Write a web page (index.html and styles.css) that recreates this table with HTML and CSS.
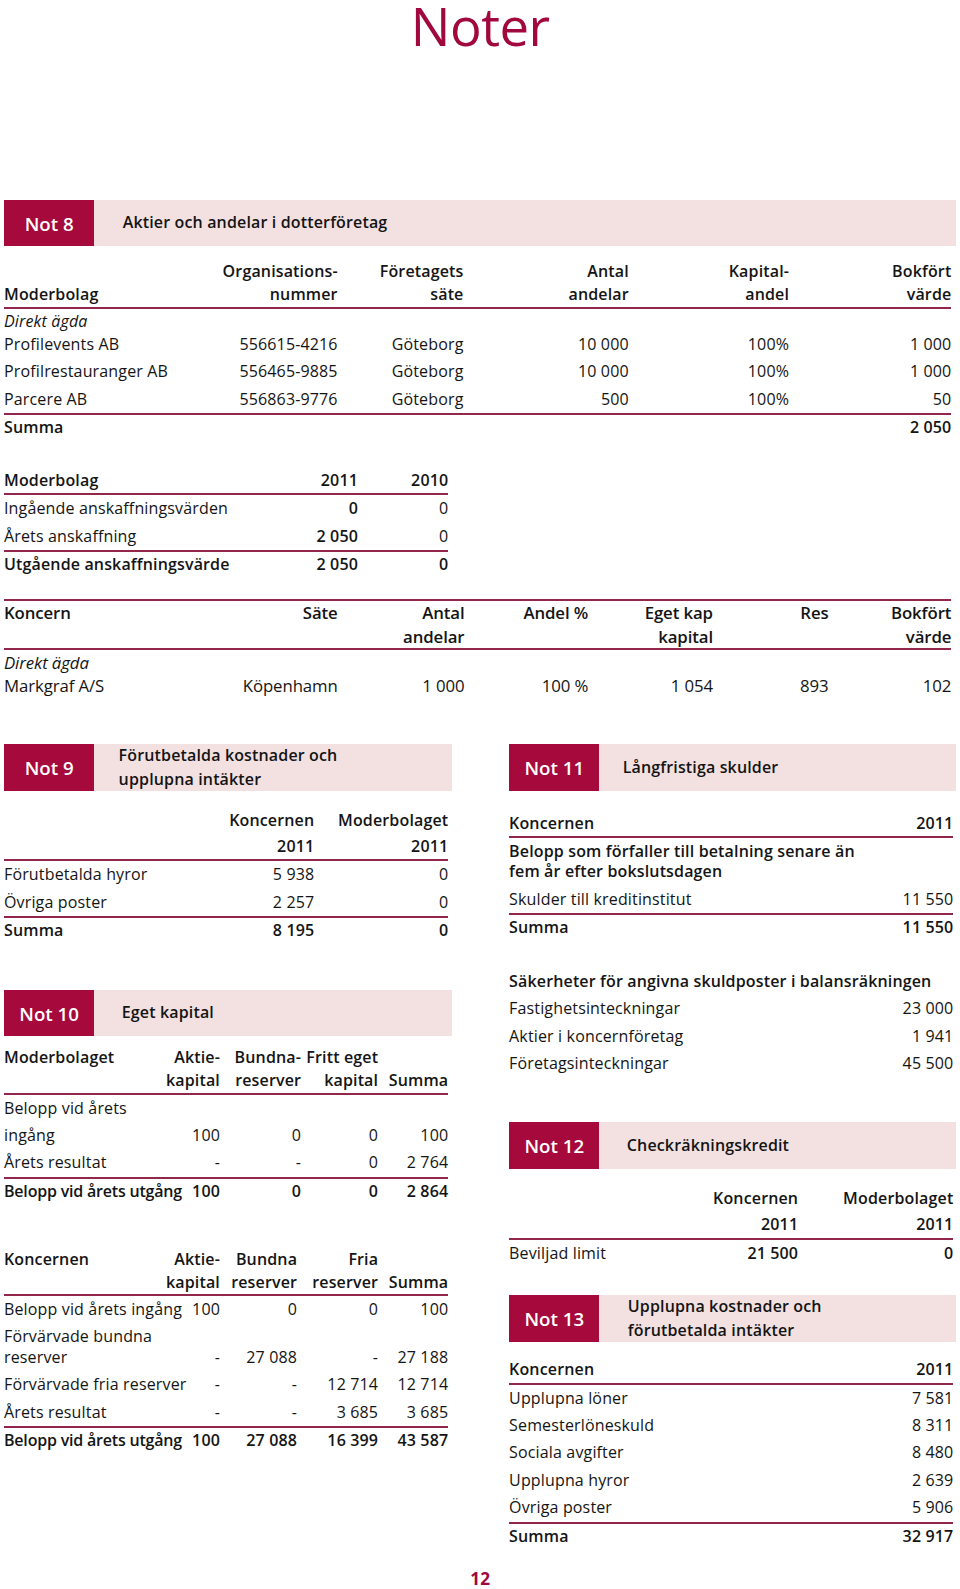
FILE: index.html
```html
<!DOCTYPE html>
<html lang="sv">
<head>
<meta charset="utf-8">
<title>Noter</title>
<link rel="stylesheet" href="styles.css">
</head>
<body>
<div class="page">
  <h1 class="title">Noter</h1>

  <section class="note8">
    <div class="band"><div class="num">Not 8</div><div class="btitle p28">Aktier och andelar i dotterföretag</div></div>

    <div class="tbl t-dotter">
      <div class="row hdr"><div>Moderbolag</div><div>Organisations-<br>nummer</div><div>Företagets<br>säte</div><div>Antal<br>andelar</div><div>Kapital-<br>andel</div><div>Bokfört<br>värde</div></div>
      <div class="row short"><div class="it">Direkt ägda</div></div>
      <div class="row"><div>Profilevents AB</div><div>556615-4216</div><div>Göteborg</div><div>10 000</div><div>100%</div><div>1 000</div></div>
      <div class="row"><div>Profilrestauranger AB</div><div>556465-9885</div><div>Göteborg</div><div>10 000</div><div>100%</div><div>1 000</div></div>
      <div class="row"><div>Parcere AB</div><div>556863-9776</div><div>Göteborg</div><div>500</div><div>100%</div><div>50</div></div>
      <div class="row sum"><div>Summa</div><div></div><div></div><div></div><div></div><div>2 050</div></div>
    </div>

    <div class="tbl t-anskaff">
      <div class="row line b"><div>Moderbolag</div><div>2011</div><div>2010</div></div>
      <div class="row"><div>Ingående anskaffningsvärden</div><div class="b">0</div><div>0</div></div>
      <div class="row"><div>Årets anskaffning</div><div class="b">2 050</div><div>0</div></div>
      <div class="row sum"><div>Utgående anskaffningsvärde</div><div>2 050</div><div>0</div></div>
    </div>

    <div class="tbl t-koncern cond">
      <div class="row hdr topline"><div class="top">Koncern</div><div class="top">Säte</div><div>Antal<br>andelar</div><div class="top">Andel %</div><div>Eget kap<br>kapital</div><div class="top">Res</div><div>Bokfört<br>värde</div></div>
      <div class="row short"><div class="it">Direkt ägda</div></div>
      <div class="row"><div>Markgraf A/S</div><div>Köpenhamn</div><div>1 000</div><div>100 %</div><div>1 054</div><div>893</div><div>102</div></div>
    </div>
  </section>

  <div class="cols">
    <div class="col">
      <div class="band"><div class="num">Not 9</div><div class="btitle p24">Förutbetalda kostnader och<br>upplupna intäkter</div></div>
      <div class="tbl t-n9">
        <div class="row b"><div></div><div>Koncernen</div><div>Moderbolaget</div></div>
        <div class="row line b"><div></div><div>2011</div><div>2011</div></div>
        <div class="row"><div>Förutbetalda hyror</div><div>5 938</div><div>0</div></div>
        <div class="row"><div>Övriga poster</div><div>2 257</div><div>0</div></div>
        <div class="row sum"><div>Summa</div><div>8 195</div><div>0</div></div>
      </div>

      <div class="band mt-n10"><div class="num">Not 10</div><div class="btitle p27">Eget kapital</div></div>
      <div class="tbl t-n10a">
        <div class="row hdr"><div class="top">Moderbolaget</div><div>Aktie-<br>kapital</div><div>Bundna-<br>reserver</div><div>Fritt eget<br>kapital</div><div>Summa</div></div>
        <div class="row"><div>Belopp vid årets</div></div>
        <div class="row"><div>ingång</div><div>100</div><div>0</div><div>0</div><div>100</div></div>
        <div class="row"><div>Årets resultat</div><div>-</div><div>-</div><div>0</div><div>2 764</div></div>
        <div class="row sum"><div class="tight">Belopp vid årets utgång</div><div>100</div><div>0</div><div>0</div><div>2 864</div></div>
      </div>

      <div class="tbl t-n10b">
        <div class="row hdr"><div class="top">Koncernen</div><div>Aktie-<br>kapital</div><div>Bundna<br>reserver</div><div>Fria<br>reserver</div><div>Summa</div></div>
        <div class="row"><div>Belopp vid årets ingång</div><div>100</div><div>0</div><div>0</div><div>100</div></div>
        <div class="row wrap"><div>Förvärvade bundna<br>reserver</div><div>-</div><div>27 088</div><div>-</div><div>27 188</div></div>
        <div class="row"><div>Förvärvade fria reserver</div><div>-</div><div>-</div><div>12 714</div><div>12 714</div></div>
        <div class="row"><div>Årets resultat</div><div>-</div><div>-</div><div>3 685</div><div>3 685</div></div>
        <div class="row sum"><div class="tight">Belopp vid årets utgång</div><div>100</div><div>27 088</div><div>16 399</div><div>43 587</div></div>
      </div>
    </div>

    <div class="col">
      <div class="band"><div class="num">Not 11</div><div class="btitle p23">Långfristiga skulder</div></div>
      <div class="tbl t-n11">
        <div class="row line b"><div>Koncernen</div><div>2011</div></div>
        <div class="block b">Belopp som förfaller till betalning senare än<br>fem år efter bokslutsdagen</div>
        <div class="row"><div>Skulder till kreditinstitut</div><div>11 550</div></div>
        <div class="row sum"><div>Summa</div><div>11 550</div></div>
      </div>

      <div class="tbl t-sak">
        <div class="row b"><div>Säkerheter för angivna skuldposter i balansräkningen</div></div>
        <div class="row"><div>Fastighetsinteckningar</div><div>23 000</div></div>
        <div class="row"><div>Aktier i koncernföretag</div><div>1 941</div></div>
        <div class="row"><div>Företagsinteckningar</div><div>45 500</div></div>
      </div>

      <div class="band mt-n12"><div class="num">Not 12</div><div class="btitle p27">Checkräkningskredit</div></div>
      <div class="tbl t-n12">
        <div class="row b"><div></div><div>Koncernen</div><div>Moderbolaget</div></div>
        <div class="row line b"><div></div><div>2011</div><div>2011</div></div>
        <div class="row"><div>Beviljad limit</div><div class="b">21 500</div><div class="b">0</div></div>
      </div>

      <div class="band mt-n13"><div class="num">Not 13</div><div class="btitle p28">Upplupna kostnader och<br>förutbetalda intäkter</div></div>
      <div class="tbl t-n13">
        <div class="row line b"><div>Koncernen</div><div>2011</div></div>
        <div class="row"><div>Upplupna löner</div><div>7 581</div></div>
        <div class="row"><div>Semesterlöneskuld</div><div>8 311</div></div>
        <div class="row"><div>Sociala avgifter</div><div>8 480</div></div>
        <div class="row"><div>Upplupna hyror</div><div>2 639</div></div>
        <div class="row"><div>Övriga poster</div><div>5 906</div></div>
        <div class="row sum"><div>Summa</div><div>32 917</div></div>
      </div>
    </div>
  </div>

  <div class="pageno">12</div>
</div>
</body>
</html>
```

FILE: styles.css
```css
* { box-sizing: border-box; }

body {
  margin: 0;
  background: #ffffff;
  color: #141414;
  font-family: "Open Sans", "Noto Sans", sans-serif;
  font-size: 16px;
  letter-spacing: 0.15px;
}

.page {
  width: 952.4px;
  margin-left: 4px;
}

.title {
  margin: 0;
  text-align: center;
  font-weight: 400;
  font-size: 52.7px;
  line-height: 52.7px;
  color: #a1083d;
  letter-spacing: -0.5px;
}

/* note header band */
.band {
  display: flex;
  height: 46.7px;
  background: #f3e1e1;
}
.note8 > .band { margin-top: 147px; }
.num {
  flex: 0 0 90.3px;
  background: #a6093c;
  color: #ffffff;
  font-weight: 600;
  font-size: 18.7px;
  letter-spacing: 0;
  display: flex;
  align-items: center;
  justify-content: center;
}
.btitle {
  display: flex;
  align-items: center;
  font-weight: 600;
  font-size: 16px;
  line-height: 23.3px;
}
.p23 { padding-left: 23.3px; }
.p24 { padding-left: 24.3px; }
.p27 { padding-left: 27.4px; }
.p28 { padding-left: 28.4px; }

/* tables */
.row {
  display: grid;
  align-items: center;
  height: 27.4px;
  line-height: 25.4px;
  white-space: nowrap;
}
.row > * { text-align: right; justify-self: end; }
.row > :first-child { text-align: left; justify-self: start; }

.line { border-bottom: 2px solid #93274a; }
.sum { border-top: 2px solid #93274a; font-weight: 600; }
.topline { border-top: 2px solid #93274a; }
.b { font-weight: 600; }
.it { font-style: italic; }
.tight { letter-spacing: -0.2px; }

.hdr {
  height: auto;
  line-height: 23.3px;
  align-items: end;
  font-weight: 600;
  border-bottom: 2px solid #93274a;
}
.hdr .top { align-self: start; }
.short { height: 22.3px; }
.wrap {
  height: auto;
  line-height: 21.3px;
  padding: 2px 0 3px;
  align-items: end;
}

/* Not 8 tables */
.t-dotter { margin-top: 13.7px; padding-right: 5px; }
.t-dotter .row { grid-template-columns: 198.8px 134.9px 125.8px 165.3px 160.3px 162.3px; }

.t-anskaff { margin-top: 27.4px; width: 448.3px; padding-right: 4px; }
.t-anskaff .row { grid-template-columns: 263.7px 90.3px 90.3px; }
.t-anskaff .sum > * { font-weight: 600; }

.t-koncern { margin-top: 21.8px; padding-right: 5px; }
.t-koncern .row { grid-template-columns: 198.8px 134.9px 126.8px 123.7px 124.8px 115.6px 122.8px; }
.cond { font-size: 16.8px; letter-spacing: -0.1px; }

/* columns */
.cols {
  display: grid;
  grid-template-columns: 448.3px 447.3px;
  column-gap: 56.8px;
  margin-top: 44.6px;
  align-items: start;
}

.t-n9 { margin-top: 15.7px; padding-right: 4px; }
.t-n9 .row { grid-template-columns: 210px 100.3px 134px; }

.mt-n10 { margin-top: 46.2px; }
.t-n10a { margin-top: 9.6px; padding-right: 4px; }
.t-n10a .row { grid-template-columns: 152.1px 63.9px 81.1px 77.1px 70.1px; }
.t-n10b { margin-top: 43.6px; padding-right: 4px; }
.t-n10b .row { grid-template-columns: 152.1px 63.9px 77.1px 81.1px 70.1px; }

.t-n11 { margin-top: 19.8px; padding-right: 3px; }
.t-n11 .row { grid-template-columns: 1fr auto; }
.block {
  line-height: 20.3px;
  padding: 3px 0 4px;
}

.t-sak { margin-top: 27.4px; padding-right: 3px; }
.t-sak .row { grid-template-columns: 1fr auto; }

.mt-n12 { margin-top: 45.1px; }
.t-n12 { margin-top: 15.7px; padding-right: 3px; }
.t-n12 .row { grid-template-columns: 190px 99.1px 155.2px; }

.mt-n13 { margin-top: 28.4px; }
.t-n13 { margin-top: 15.2px; padding-right: 3px; }
.t-n13 .row { grid-template-columns: 1fr auto; }

.pageno {
  margin-top: 19.8px;
  text-align: center;
  font-weight: 700;
  font-size: 17.2px;
  line-height: 20.3px;
  color: #a1083d;
  letter-spacing: 0;
}
```
